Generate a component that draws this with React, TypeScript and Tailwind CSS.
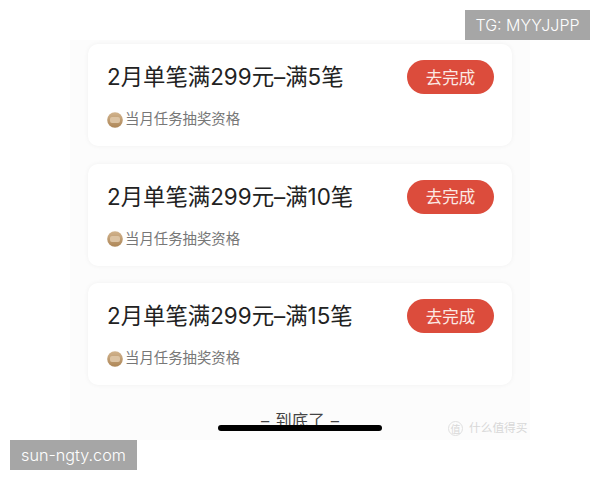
const FONT = "font-['Inter','Noto_Sans_CJK_SC',sans-serif]";

const TASKS = ["2月单笔满299元–满5笔", "2月单笔满299元–满10笔", "2月单笔满299元–满15笔"];

function CoinIcon() {
  return (
    <svg width="16" height="16" viewBox="0 0 16 16" className="shrink-0">
      <defs>
        <linearGradient id="coin" x1="0" y1="0" x2="0" y2="1">
          <stop offset="0" stopColor="#d2b48e" />
          <stop offset="1" stopColor="#ad8657" />
        </linearGradient>
      </defs>
      <circle cx="8" cy="8" r="7.8" fill="url(#coin)" />
      <rect x="3" y="5" width="10" height="6" rx="2" fill="#dcc3a3" />
    </svg>
  );
}

function TaskCard({ title }: { title: string }) {
  return (
    <div className="h-[102px] rounded-[10px] bg-white shadow-[0_0_5px_rgba(0,0,0,0.05)] pl-[19px] pr-[18px] pt-4">
      <div className="flex items-center justify-between h-[34px]">
        <span className="text-[22.4px] leading-none text-[#222] mt-[1px]">{title}</span>
        <button className="w-[87px] h-[34px] rounded-full bg-[#dc4c3c] text-[#fbe9e4] text-[16.5px] leading-none pt-[2px]">
          去完成
        </button>
      </div>
      <div className="flex items-center gap-[2px] mt-[17.5px]">
        <CoinIcon />
        <span className="text-[14.4px] leading-none text-[#777]">当月任务抽奖资格</span>
      </div>
    </div>
  );
}

export default function App() {
  return (
    <div className={`${FONT} relative w-[600px] h-[480px] bg-white overflow-hidden`}>
      <div className="absolute right-[10px] top-[10px] w-[125px] h-[30px] bg-[#a6a6a6] text-white text-[16px] font-light flex items-center justify-center z-10">
        TG: MYYJJPP
      </div>

      <div className="ml-[70px] pt-10 w-[460px]">
        <div className="h-[400px] bg-[#fcfcfc] px-[18px] pt-1 flex flex-col">
          <div className="flex flex-col gap-[17.5px]">
            {TASKS.map((t) => (
              <TaskCard key={t} title={t} />
            ))}
          </div>
          <div className="mt-[28px] flex justify-center gap-[6px] text-[16.5px] leading-none text-[#444]">
            <span>–</span>
            <span>到底了</span>
            <span>–</span>
          </div>
        </div>
      </div>

      {/* home indicator */}
      <div className="absolute left-[218px] top-[425px] w-[164px] h-[6px] rounded-full bg-black" />

      {/* watermark */}
      <div className="absolute left-[448px] top-[421px] flex items-center gap-[6px] text-[#d8d8d8]">
        <span className="w-[15px] h-[15px] rounded-full border border-[#e0e0e0] text-[10px] leading-none flex items-center justify-center">
          值
        </span>
        <span className="text-[11.7px] leading-none">什么值得买</span>
      </div>

      <div className="absolute left-[10px] top-[440px] w-[127px] h-[30px] bg-[#a6a6a6] text-white text-[16.2px] font-light flex items-center justify-center">
        sun-ngty.com
      </div>
    </div>
  );
}
